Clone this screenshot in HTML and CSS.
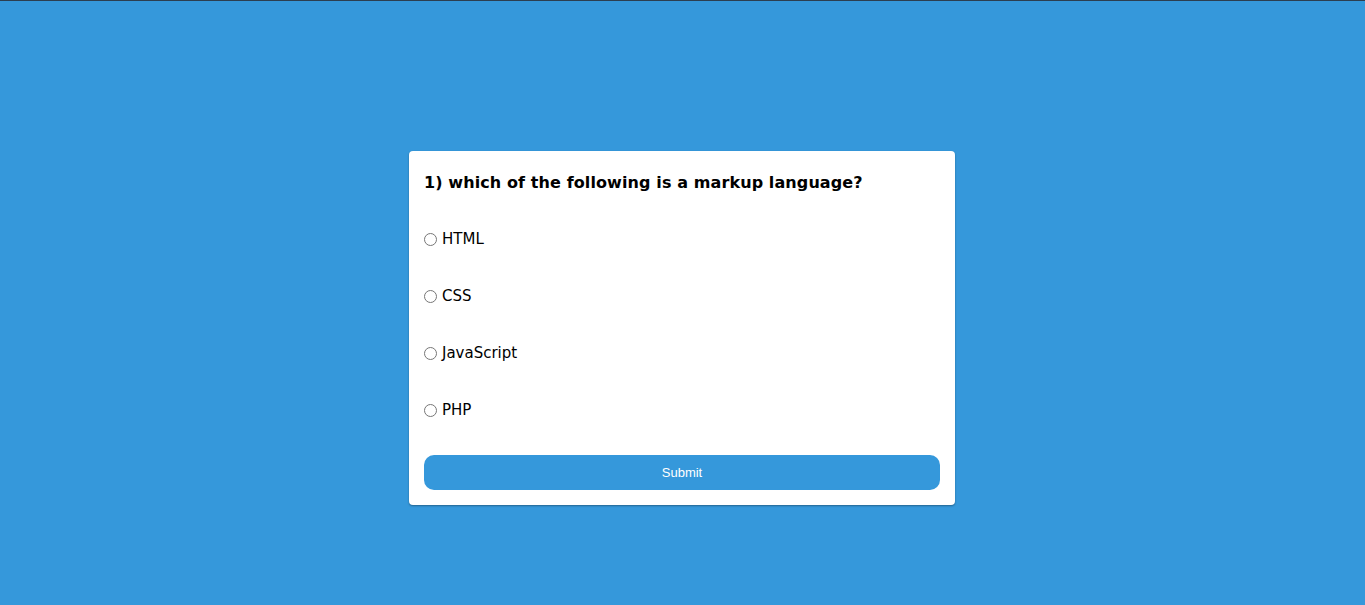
FILE: index.html
```html
<!DOCTYPE html>
<html lang="en">
<head>
<meta charset="utf-8">
<title>Quiz</title>
<link rel="stylesheet" href="styles.css">
</head>
<body>
<div class="page">
  <div class="quiz">
    <h2 class="question">1) which of the following is a markup language?</h2>
    <ul class="options">
      <li><label class="option"><input type="radio" name="answer"><span>HTML</span></label></li>
      <li><label class="option"><input type="radio" name="answer"><span>CSS</span></label></li>
      <li><label class="option"><input type="radio" name="answer"><span>JavaScript</span></label></li>
      <li><label class="option"><input type="radio" name="answer"><span>PHP</span></label></li>
    </ul>
    <button class="submit" type="button">Submit</button>
  </div>
</div>
</body>
</html>
```
FILE: styles.css
```css
html, body {
  margin: 0;
  padding: 0;
}
body {
  background: #3598db;
  font-family: "DejaVu Sans", Verdana, sans-serif;
  color: #000;
}
.page {
  box-sizing: border-box;
  min-height: 100vh;
  border-top: 1px solid #2c3e50;
  padding: 150px 1px 0 0;
  display: flex;
  justify-content: center;
  align-items: flex-start;
}
.quiz {
  width: 546px;
  box-sizing: border-box;
  background: #fff;
  border-radius: 4px;
  padding: 15px;
  box-shadow: 0 1px 2px rgba(0, 0, 0, 0.35);
}
.question {
  margin: 0;
  height: 30px;
  line-height: 33px;
  font-size: 16px;
  font-weight: bold;
  letter-spacing: 0.1px;
}
.options {
  list-style: none;
  margin: 33px 0 0;
  padding: 0;
  display: flex;
  flex-direction: column;
  gap: 37px;
}
.option {
  display: flex;
  align-items: center;
  height: 20px;
  font-size: 15px;
}
.option input {
  margin: 0 5px 0 0;
  width: 13px;
  height: 13px;
}
.submit {
  display: block;
  width: 100%;
  height: 35px;
  margin-top: 35px;
  border: none;
  border-radius: 10px;
  background: #3598db;
  color: #fff;
  font-family: "Liberation Sans", Arial, sans-serif;
  font-size: 13px;
  font-weight: normal;
  padding: 0;
}
```
